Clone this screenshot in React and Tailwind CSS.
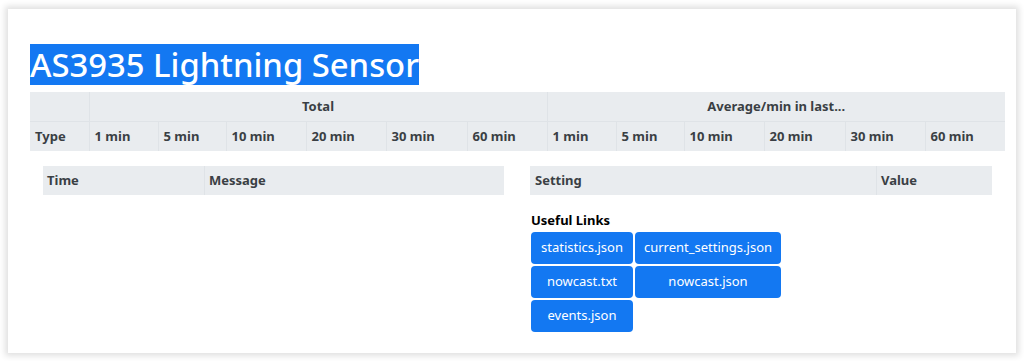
import React from "react";

const subs = ["1 min", "5 min", "10 min", "20 min", "30 min", "60 min"];
const w1 = [69, 68, 80, 80, 81, 80];
const w2 = [69, 68, 80, 81, 80, 80];

export default function App() {
  return (
    <div className="w-[1024px] h-[361px] bg-white overflow-hidden pt-[9px] pl-[8px]" style={{ fontFamily: '"Noto Sans", "Open Sans", sans-serif' }}>
      <div className="w-[1008px] h-[344px] bg-white shadow-[0_0_6px_3px_rgba(0,0,0,0.12)] pl-[22px] pt-[35px]">
        <div className="h-[48px]">
          <span className="inline-block bg-[#1378f2] text-white text-[32.8px] font-medium leading-[41px]">AS3935 Lightning Sensor</span>
        </div>
        <table className="border-collapse text-[13px] font-bold text-[#3a3f44] bg-[#e9ecef]">
          <tbody>
            <tr className="h-[29px]">
              <td className="w-[59px] border-r border-b border-[#dfe3e7]"></td>
              <td colSpan={6} className="text-center border-r border-b border-[#dfe3e7]">Total</td>
              <td colSpan={6} className="text-center border-b border-[#dfe3e7]">Average/min in last...</td>
            </tr>
            <tr className="h-[30px]">
              <td className="px-[5px] pt-[1px] border-r border-[#dfe3e7]">Type</td>
              {subs.map((s, i) => (
                <td key={"a" + i} style={{ width: w1[i] }} className="px-[5px] pt-[1px] border-r border-[#dfe3e7]">{s}</td>
              ))}
              {subs.map((s, i) => (
                <td key={"b" + i} style={{ width: w2[i] }} className="px-[5px] pt-[1px] border-r last:border-r-0 border-[#dfe3e7]">{s}</td>
              ))}
            </tr>
          </tbody>
        </table>
        <div className="flex w-[975px] mt-[15px]">
          <div className="w-[487px] px-[13px]">
            <div className="flex h-[29px] bg-[#e9ecef] text-[13px] font-bold text-[#3a3f44]">
              <div className="w-[162px] px-[4px] flex items-center border-r border-[#dfe3e7]">Time</div>
              <div className="flex-1 px-[4px] flex items-center">Message</div>
            </div>
          </div>
          <div className="w-[488px] pl-[13px] pr-[13px]">
            <div className="flex h-[29px] bg-[#e9ecef] text-[13px] font-bold text-[#3a3f44]">
              <div className="w-[347px] px-[5px] flex items-center border-r border-[#dfe3e7]">Setting</div>
              <div className="flex-1 px-[4px] flex items-center">Value</div>
            </div>
            <div className="mt-[16px] pl-[1px]">
              <div className="text-[13px] font-bold text-black leading-[18px]">Useful Links</div>
              <div className="grid grid-cols-[102px_146px] gap-[2px] mt-[3px]">
                {["statistics.json", "current_settings.json", "nowcast.txt", "nowcast.json", "events.json"].map((t) => (
                  <div key={t} className="h-[32px] rounded-[4px] bg-[#1378f2] text-white text-[13px] flex items-center justify-center">{t}</div>
                ))}
              </div>
            </div>
          </div>
        </div>
      </div>
    </div>
  );
}
